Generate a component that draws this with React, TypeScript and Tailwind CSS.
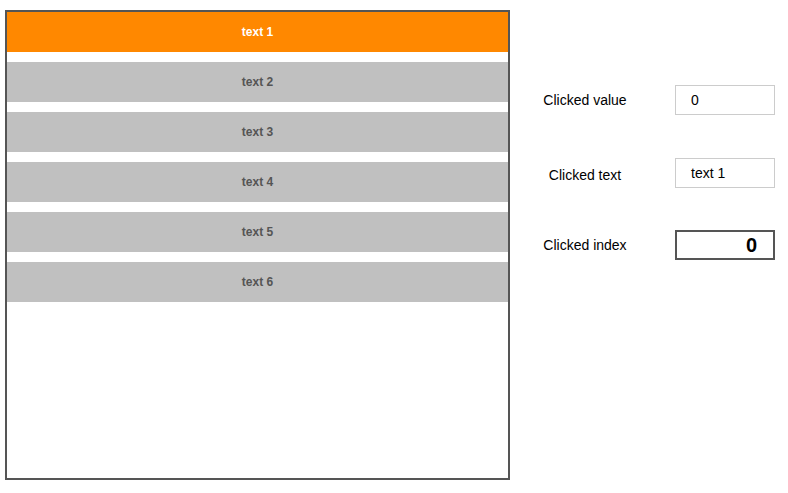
import { useState } from "react";

const items = ["text 1", "text 2", "text 3", "text 4", "text 5", "text 6"];

export default function App() {
	const [index, setIndex] = useState(0);

	return (
		<div className="flex pt-[10px] pl-[5px] bg-white font-['Liberation_Sans',Arial,sans-serif] text-black">
			<div className="w-[505px] h-[470px] border-2 border-[#555]">
				{items.map((item, i) => (
					<div
						key={item}
						onClick={() => setIndex(i)}
						className={
							i === index
								? "h-[40px] mb-[10px] flex items-center justify-center bg-[#ff8800] text-white text-[12px] font-bold cursor-pointer"
								: "h-[40px] mb-[10px] flex items-center justify-center bg-[#c0c0c0] text-[#555] text-[12px] font-bold cursor-pointer"
						}>
						{item}
					</div>
				))}
			</div>

			<div className="ml-[20px] pt-[75px] flex flex-col text-[14px]">
				<div className="flex items-center h-[30px]">
					<span className="w-[110px] text-center">Clicked value</span>
					<div className="ml-[35px] w-[100px] h-[30px] border border-[#ccc] pl-[15px] flex items-center">
						{index}
					</div>
				</div>
				<div className="flex items-center h-[30px] mt-[43px]">
					<span className="w-[110px] text-center pt-[5px]">Clicked text</span>
					<div className="ml-[35px] w-[100px] h-[30px] border border-[#ccc] pl-[15px] flex items-center">
						{items[index]}
					</div>
				</div>
				<div className="flex items-center h-[30px] mt-[42px]">
					<span className="w-[110px] text-center">Clicked index</span>
					<div className="ml-[35px] w-[100px] h-[30px] border-2 border-[#555] pr-[16px] flex items-center justify-end text-[20px] font-bold">
						{index}
					</div>
				</div>
			</div>
		</div>
	);
}
